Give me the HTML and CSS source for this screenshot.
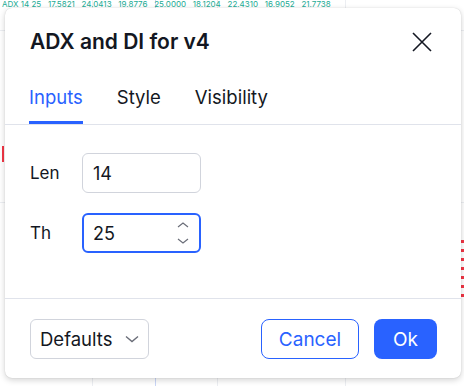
FILE: index.html
```html
<!DOCTYPE html>
<html>
  <head>
    <title>ADX and DI for v4</title>
    <meta name="viewport" content="width=device-width, initial-scale=1.0" />
    <link rel="stylesheet" href="styles.css">
  </head>
  <body>
    <!-- chart behind the dialog -->
    <div class="chart">
      <div class="legend">ADX 14 25 &nbsp; 17.5821 &nbsp; 24.0413 &nbsp; 19.8776 &nbsp; 25.0000 &nbsp; 18.1204 &nbsp; 22.4310 &nbsp; 16.9052 &nbsp; 21.7738</div>
      <div class="candle candle-left"></div>
      <div class="marks"></div>
    </div>

    <div class="dialog">
      <div class="dialog-header">
        <h1 class="dialog-title">ADX and DI for v4</h1>
        <button type="button" class="close-btn" aria-label="Close">
          <svg width="20" height="20" viewBox="0 0 20 20">
            <path d="M1 1 L19 19 M19 1 L1 19" stroke="#131722" stroke-width="1.6" fill="none" />
          </svg>
        </button>
      </div>

      <div class="tabs">
        <div class="tab active">Inputs</div>
        <div class="tab">Style</div>
        <div class="tab">Visibility</div>
      </div>

      <div class="dialog-body">
        <div class="form-row">
          <label for="len">Len</label>
          <div class="field">
            <input type="text" id="len" value="14" />
          </div>
        </div>
        <div class="form-row">
          <label for="th">Th</label>
          <div class="field focused">
            <input type="text" id="th" value="25" />
            <span class="spinner">
              <svg width="14" height="24" viewBox="0 0 14 24">
                <path d="M2 6 L7 2 L12 6" stroke="#6a6d78" stroke-width="1.2" fill="none" />
                <path d="M2 18 L7 22 L12 18" stroke="#6a6d78" stroke-width="1.2" fill="none" />
              </svg>
            </span>
          </div>
        </div>
      </div>

      <div class="dialog-footer">
        <div class="select">
          <span>Defaults</span>
          <svg width="14" height="8" viewBox="0 0 14 8">
            <path d="M1 1.5 L7 6.5 L13 1.5" stroke="#6a6d78" stroke-width="1.4" fill="none" />
          </svg>
        </div>
        <div class="actions">
          <button type="button" class="btn btn-outline">Cancel</button>
          <button type="button" class="btn btn-primary">Ok</button>
        </div>
      </div>
    </div>
  </body>
</html>
```

FILE: styles.css
```css
body {
  margin: 0;
  font-family: Inter, "Noto Sans", sans-serif;
  color: #131722;
  background-color: #ffffff;
  width: 464px;
  height: 386px;
  overflow: hidden;
}

.chart {
  position: relative;
  width: 464px;
  height: 386px;
  background-image:
    linear-gradient(to right, transparent 92px, #eceef2 92px, #eceef2 93px, transparent 93px,
      transparent 155px, #c9d6f7 155px, #c9d6f7 156px, transparent 156px,
      transparent 217px, #eceef2 217px, #eceef2 218px, transparent 218px,
      transparent 345px, #eceef2 345px, #eceef2 346px, transparent 346px),
    linear-gradient(to bottom, transparent 30px, #eceef2 30px, #eceef2 31px, transparent 31px,
      transparent 202px, #eceef2 202px, #eceef2 203px, transparent 203px);
}

.legend {
  position: absolute;
  top: 0;
  left: 2px;
  font-size: 8px;
  line-height: 8px;
  color: #22ab94;
  white-space: nowrap;
}

.candle-left {
  position: absolute;
  left: 2px;
  top: 146px;
  width: 2px;
  height: 16px;
  background-color: #f23645;
}

.marks {
  position: absolute;
  right: 0;
  top: 240px;
  width: 3px;
  height: 60px;
  background-image: repeating-linear-gradient(to bottom, #f23645 0, #f23645 3px, transparent 3px, transparent 9px);
}

/* dialog sits over the chart */
.dialog {
  position: absolute;
  left: 5px;
  top: 8px;
  width: 456px;
  height: 370px;
  background: #ffffff;
  border-radius: 7px;
  box-shadow: 0 2px 6px rgba(0, 0, 0, 0.18), 0 0 1px rgba(0, 0, 0, 0.2);
  display: flex;
  flex-direction: column;
}

.dialog-header {
  display: flex;
  align-items: center;
  justify-content: space-between;
  padding: 20px 29px 0 25px;
  height: 28px;
}

.dialog-title {
  margin: 0;
  font-size: 21px;
  font-weight: 600;
  line-height: 28px;
}

.close-btn {
  border: none;
  background: none;
  padding: 0;
  width: 20px;
  height: 20px;
  cursor: pointer;
}

.close-btn svg {
  display: block;
}

.tabs {
  display: flex;
  gap: 34px;
  margin-top: 20px;
  padding: 0 24px;
  border-bottom: 1px solid #e0e3eb;
}

.tab {
  font-size: 18.5px;
  line-height: 24px;
  padding: 9px 0 12px;
  border-bottom: 3px solid transparent;
}

.tab.active {
  color: #2962ff;
  border-bottom-color: #2962ff;
}

.dialog-body {
  display: flex;
  flex-direction: column;
  gap: 20px;
  padding: 28px 25px 0;
  height: 145px;
  border-bottom: 1px solid #e0e3eb;
}

.form-row {
  display: flex;
  align-items: center;
  height: 40px;
}

.form-row label {
  width: 52px;
  font-size: 17px;
}

.field {
  display: flex;
  align-items: center;
  width: 119px;
  height: 40px;
  box-sizing: border-box;
  border: 1px solid #d1d4dc;
  border-radius: 6px;
  padding: 0 10px;
}

.field.focused {
  border: 2px solid #2962ff;
  padding: 0 9px;
}

.field input {
  border: none;
  outline: none;
  font-family: inherit;
  font-size: 18px;
  color: #131722;
  width: 70px;
  padding: 0;
  flex: 1;
  background: transparent;
}

.spinner svg {
  display: block;
}

.dialog-footer {
  display: flex;
  align-items: center;
  justify-content: space-between;
  padding: 20px 24px 0 25px;
}

.select {
  display: flex;
  align-items: center;
  justify-content: space-between;
  box-sizing: border-box;
  width: 119px;
  height: 40px;
  padding: 0 9px 0 9px;
  border: 1px solid #d1d4dc;
  border-radius: 6px;
  font-size: 18.5px;
}

.actions {
  display: flex;
  gap: 15px;
}

.btn {
  font-family: inherit;
  font-size: 19px;
  height: 40px;
  border-radius: 8px;
  cursor: pointer;
}

.btn-outline {
  width: 98px;
  background: #ffffff;
  color: #2962ff;
  border: 1px solid #2962ff;
}

.btn-primary {
  width: 63px;
  background: #2962ff;
  color: #ffffff;
  border: none;
}
```
